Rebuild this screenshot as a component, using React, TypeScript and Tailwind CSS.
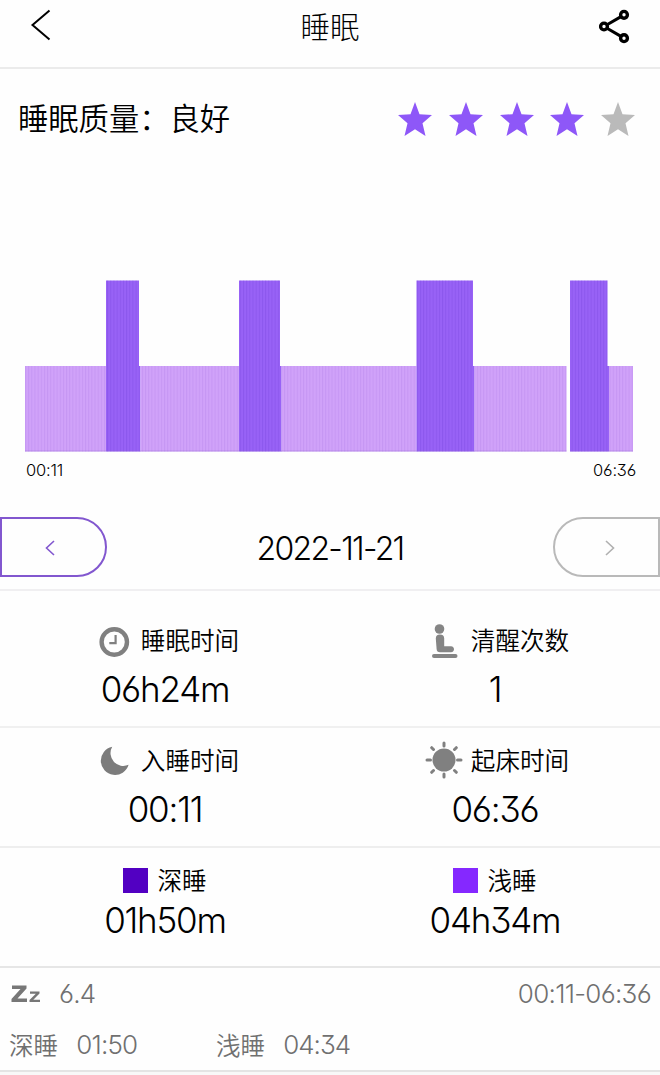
import type { ReactNode } from 'react'

const NUM = "font-['Inter','Noto_Sans_CJK_SC',sans-serif] [font-feature-settings:'cv03','cv09']"

interface Segment {
  start: number
  end: number
  deep: boolean
}

const segments: Segment[] = [
  { start: 0, end: 81, deep: false },
  { start: 81, end: 115.5, deep: true },
  { start: 115.5, end: 214, deep: false },
  { start: 214, end: 256.5, deep: true },
  { start: 256.5, end: 391.5, deep: false },
  { start: 391.5, end: 449.5, deep: true },
  { start: 449.5, end: 541.5, deep: false },
  { start: 545, end: 584, deep: true },
  { start: 584, end: 608, deep: false },
]

function Star({ active }: { active: boolean }) {
  return (
    <svg width="34" height="34" viewBox="0 0 34 34" className={active ? 'fill-[#8e57f8]' : 'fill-[#bababa]'}>
      <path d="M17 0L21.5 12.2L34 12.9L24.5 21.2L27.5 34L17 27.2L6.5 34L9.5 21.2L0 12.9L12.5 12.2Z" />
    </svg>
  )
}

function SleepChart() {
  return (
    <svg width="608" height="172" viewBox="0 0 608 172" className="block">
      <defs>
        <pattern id="stripes" width="3.16" height="172" patternUnits="userSpaceOnUse">
          <rect width="1" height="172" fill="#7040d8" opacity="0.3" />
        </pattern>
        <pattern id="lightStripes" width="3.16" height="172" patternUnits="userSpaceOnUse">
          <rect width="1" height="172" fill="#b080e8" opacity="0.35" />
        </pattern>
      </defs>
      {segments.map(({ start, end, deep }) => {
        const d = deep
          ? `M${start} 0.5H${end - 1.5}V86H${end}V171.5H${start}Z`
          : `M${start} 86H${end}V171.5H${start}Z`
        return (
          <g key={start}>
            <path d={d} fill={deep ? '#9862f6' : '#d0a2f9'} />
            <path d={d} fill={deep ? 'url(#stripes)' : 'url(#lightStripes)'} />
          </g>
        )
      })}
      <path d="M0 171H541.5M545 171H608" stroke="#8c60c8" strokeOpacity="0.35" />
    </svg>
  )
}

function ClockIcon() {
  return (
    <svg width="32" height="32" viewBox="0 0 32 32" fill="none" stroke="#808080" className="mt-0.5">
      <circle cx="16.3" cy="16" r="12.7" strokeWidth="4.4" />
      <path d="M17.6 9V17.2H11.3" strokeWidth="2.2" />
    </svg>
  )
}

function SittingIcon() {
  return (
    <svg width="32" height="36" viewBox="0 0 32 36" fill="#858585">
      <circle cx="11.5" cy="6" r="4.8" />
      <path d="M7.8 15.5Q7.8 11.4 11.9 11.4Q16.2 11.4 16.2 15.5V23.2H23C27 23.2 27 29.2 23 29.2H12Q8.8 29.2 8.6 26Z" />
      <rect x="4" y="31" width="25.5" height="4" rx="2" />
    </svg>
  )
}

function MoonIcon() {
  return (
    <svg width="30" height="30" viewBox="0 0 30 30" fill="#7c7c7c" className="ml-0.5">
      <path d="M12.2 0.8A14.2 14.2 0 1 0 28.6 18.8A12.8 12.8 0 0 1 12.2 0.8Z" />
    </svg>
  )
}

function SunIcon() {
  return (
    <svg width="38" height="38" viewBox="0 0 38 38" stroke="#808080" strokeWidth="3" strokeLinecap="round" className="-mt-0.5">
      <circle cx="19" cy="19" r="11.5" fill="#808080" stroke="none" />
      <path d="M19 2V5M19 33V36M2 19H5.5M32.5 19H36M6.7 6.7L8.5 8.5M29.5 29.5L31.3 31.3M6.7 31.3L8.5 29.5M29.5 8.5L31.3 6.7" />
    </svg>
  )
}

interface StatProps {
  icon: ReactNode
  label: string
  value: string
}

function Stat({ icon, label, value }: StatProps) {
  return (
    <div className="flex w-1/2 flex-col items-center">
      <div className="flex h-9 items-center gap-1">
        <span className="flex w-[46px] justify-center">{icon}</span>
        <span className="pb-1 text-[24.6px] leading-8">{label}</span>
      </div>
      <div className={`${NUM} mt-2 text-[35px] leading-[45px] tracking-[-1.2px]`}>{value}</div>
    </div>
  )
}

function Phase({ color, label, value }: { color: string; label: string; value: string }) {
  return (
    <div className="flex w-1/2 flex-col items-center">
      <div className="flex h-9 items-center gap-[9px]">
        <span className={`size-[25px] ${color}`} />
        <span className="pb-0.5 text-[24.6px] leading-8">{label}</span>
      </div>
      <div className={`${NUM} text-[35px] leading-[45px] tracking-[-1.2px]`}>{value}</div>
    </div>
  )
}

export default function App() {
  return (
    <div className="h-[1075px] w-[660px] overflow-hidden bg-[#f8f8f8] font-['Noto_Sans_CJK_SC',sans-serif] font-[350] text-black">
      <div className="h-[1072px] border-b-2 border-[#e4e4e4] bg-[#fefefe]">
        <header className="flex h-[69px] items-start justify-between border-b-2 border-[#ebebeb] pl-[30px] pr-[29px]">
          <svg width="22" height="32" viewBox="0 0 22 32" fill="none" stroke="#000" strokeWidth="2" className="mt-[9px]">
            <path d="M19.5 1.5L2.5 16L19.5 30.5" />
          </svg>
          <h1 className="mt-[3px] pl-[9px] text-[29.5px] font-light leading-[44px]">睡眠</h1>
          <svg width="32" height="36" viewBox="0 0 32 36" fill="none" stroke="#000" strokeWidth="3.4" className="mt-[9px]">
            <circle cx="5" cy="17.5" r="3.4" />
            <circle cx="25" cy="5.8" r="3.4" />
            <circle cx="25" cy="29.2" r="3.4" />
            <path d="M8 15.7L22 7.6M8 19.3L22 27.4" strokeWidth="3" />
          </svg>
        </header>

        <section className="flex h-[100px] items-center justify-between pl-[18px] pr-[25px]">
          <h2 className="pb-1 text-[30.3px] leading-[44px]">睡眠质量：良好</h2>
          <div className="flex gap-[16.7px]">
            {[1, 2, 3, 4, 5].map((n) => (
              <Star key={n} active={n <= 4} />
            ))}
          </div>
        </section>

        <section className="px-[25px] pt-[111px]">
          <SleepChart />
          <div className={`${NUM} mt-1.5 flex justify-between pl-px text-[16.5px] leading-6 tracking-[-0.2px]`}>
            <span>00:11</span>
            <span className="-mr-px">06:36</span>
          </div>
        </section>

        <section className="mt-[35px] flex h-[74px] items-start justify-between border-b-2 border-[#f0eff1]">
          <button className="flex h-[60px] w-[107px] items-center justify-center rounded-r-full border-2 border-[#8257cf] pr-[7px]">
            <svg width="12" height="18" viewBox="0 0 12 18" fill="none" stroke="#8257cf" strokeWidth="1.6" className="mt-0.5">
              <path d="M10 2L2.5 9L10 16" />
            </svg>
          </button>
          <span className={`${NUM} pt-0.5 text-[32px] leading-[60px] tracking-[-1.7px]`}>2022-11-21</span>
          <button className="flex h-[60px] w-[107px] items-center justify-center rounded-l-full border-2 border-[#b9b9b9] pl-[7px]">
            <svg width="12" height="18" viewBox="0 0 12 18" fill="none" stroke="#b0b0b0" strokeWidth="1.6" className="mt-0.5">
              <path d="M2 2L9.5 9L2 16" />
            </svg>
          </button>
        </section>

        <section className="flex h-[137px] border-b-2 border-[#f0f0f0] pt-8">
          <Stat icon={<ClockIcon />} label="睡眠时间" value="06h24m" />
          <Stat icon={<SittingIcon />} label="清醒次数" value="1" />
        </section>
        <section className="flex h-[120px] border-b-2 border-[#eeeeee] pt-[15px]">
          <Stat icon={<MoonIcon />} label="入睡时间" value="00:11" />
          <Stat icon={<SunIcon />} label="起床时间" value="06:36" />
        </section>
        <section className="flex h-[120px] border-b-2 border-[#e6e6e6] pt-3.5">
          <Phase color="bg-[#5200c2]" label="深睡" value="01h50m" />
          <Phase color="bg-[#8528ff]" label="浅睡" value="04h34m" />
        </section>

        <footer className="text-[#707070]">
          <div className="flex h-[52px] items-center justify-between pl-[11px] pr-[9px]">
            <div className="flex items-center">
              <svg width="30" height="18" viewBox="0 0 30 18" fill="#777777">
                <path d="M1 0.5H15.5V3.5L6.5 13.6H16V17H0.5V14L9.5 3.9H1Z" />
                <path d="M19 6.5H28.5V8.6L22.3 14.8H29V17H18.5V14.9L24.8 8.7H19Z" />
              </svg>
              <span className={`${NUM} ml-[18px] text-[26px] leading-9 tracking-[-0.8px]`}>6.4</span>
            </div>
            <span className={`${NUM} text-[26px] leading-9 tracking-[-0.7px]`}>00:11-06:36</span>
          </div>
          <div className="flex h-[50px] items-center pl-[9px] text-[24.6px] leading-8">
            <div className="flex w-[207px] items-center gap-[18px]">
              <span className="pb-[3px]">深睡</span>
              <span className={`${NUM} text-[26px] tracking-[-0.8px]`}>01:50</span>
            </div>
            <div className="flex items-center gap-[18px]">
              <span className="pb-[3px]">浅睡</span>
              <span className={`${NUM} text-[26px] tracking-[-1px]`}>04:34</span>
            </div>
          </div>
        </footer>
      </div>
    </div>
  )
}
